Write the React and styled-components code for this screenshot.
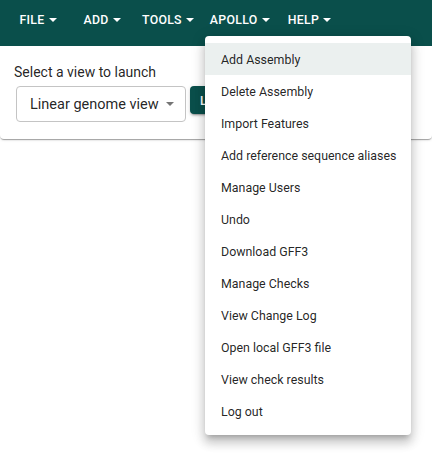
import React from "react";
import styled, { createGlobalStyle } from "styled-components";

const GlobalStyle = createGlobalStyle`
  html, body { margin: 0; padding: 0; background: #fff; }
  body { font-family: Roboto, "Liberation Sans", Arial, sans-serif; color: rgba(0,0,0,0.87); }
`;

const Page = styled.div`
  position: relative;
  width: 432px;
  height: 453px;
  overflow: hidden;
  background: #fff;
`;

const AppBar = styled.header`
  height: 46px;
  background: #0a4f4b;
  display: flex;
  align-items: flex-start;
  padding: 5px 0 0 6px;
  box-sizing: border-box;
  position: relative;
  z-index: 2;
`;

const NavButton = styled.button`
  min-width: 64px;
  height: 30px;
  padding: 0 8px;
  border: 0;
  background: transparent;
  color: #fff;
  font-family: Roboto, "Liberation Sans", sans-serif;
  font-weight: 500;
  font-size: 12.3px;
  letter-spacing: 0.3px;
  text-transform: uppercase;
  display: flex;
  align-items: center;
  justify-content: center;
  gap: 4px;
  cursor: pointer;
`;

const Caret = styled.svg`
  width: 8px;
  height: 4px;
  flex: none;
  fill: ${p => p.$color || "#fff"};
`;

const Paper = styled.section`
  background: #fff;
  padding: 18px 14px 17px;
  border-radius: 0 0 4px 4px;
  box-shadow: 0 2px 1px -1px rgba(0,0,0,0.2), 0 1px 1px 0 rgba(0,0,0,0.14), 0 1px 3px 0 rgba(0,0,0,0.12);
`;

const Label = styled.div`
  font-size: 14px;
  line-height: 17px;
  color: rgba(0,0,0,0.87);
  margin-bottom: 5px;
`;

const Row = styled.div`
  display: flex;
  align-items: flex-start;
  gap: 4px;
  padding-left: 2px;
`;

const Select = styled.div`
  width: 170px;
  height: 36px;
  box-sizing: border-box;
  border: 1px solid #c4c4c4;
  border-radius: 4px;
  display: flex;
  align-items: center;
  justify-content: space-between;
  padding: 0 11px 0 13px;
  font-size: 14.5px;
  white-space: nowrap;
  color: rgba(0,0,0,0.87);
`;

const LaunchButton = styled.button`
  height: 28px;
  padding: 0 10px;
  border: 0;
  border-radius: 4px;
  background: #0a4f4b;
  color: #fff;
  font-family: Roboto, "Liberation Sans", sans-serif;
  font-weight: 500;
  font-size: 12.5px;
  text-transform: uppercase;
  white-space: nowrap;
  box-shadow: 0 3px 1px -2px rgba(0,0,0,0.2), 0 2px 2px 0 rgba(0,0,0,0.14), 0 1px 5px 0 rgba(0,0,0,0.12);
`;

const Menu = styled.ul`
  position: absolute;
  top: 36px;
  left: 205px;
  width: 206px;
  margin: 0;
  padding: 7px 0 8px;
  list-style: none;
  background: #fff;
  border-radius: 4px;
  z-index: 3;
  box-shadow: 0 5px 5px -3px rgba(0,0,0,0.2), 0 8px 10px 1px rgba(0,0,0,0.14), 0 3px 14px 2px rgba(0,0,0,0.12);
`;

const MenuItem = styled.li`
  height: 32px;
  box-sizing: border-box;
  display: flex;
  align-items: center;
  padding: 0 16px;
  font-size: 12.4px;
  color: rgba(0,0,0,0.87);
  background: ${p => (p.$active ? "#ebf0ef" : "transparent")};
  white-space: nowrap;
`;

const navItems = ["File", "Add", "Tools", "Apollo", "Help"];

const menuItems = [
  "Add Assembly",
  "Delete Assembly",
  "Import Features",
  "Add reference sequence aliases",
  "Manage Users",
  "Undo",
  "Download GFF3",
  "Manage Checks",
  "View Change Log",
  "Open local GFF3 file",
  "View check results",
  "Log out",
];

const DropIcon = ({ color }) => (
  <Caret viewBox="0 0 8 4" $color={color}>
    <path d="M0 0h8L4 4z" />
  </Caret>
);

export default function App() {
  return (
    <Page>
      <GlobalStyle />
      <AppBar>
        {navItems.map(item => (
          <NavButton key={item}>
            {item}
            <DropIcon />
          </NavButton>
        ))}
      </AppBar>
      <Paper>
        <Label>Select a view to launch</Label>
        <Row>
          <Select>
            Linear genome view
            <DropIcon color="#757575" />
          </Select>
          <LaunchButton>Launch</LaunchButton>
        </Row>
      </Paper>
      <Menu>
        {menuItems.map((item, i) => (
          <MenuItem key={item} $active={i === 0}>
            {item}
          </MenuItem>
        ))}
      </Menu>
    </Page>
  );
}
